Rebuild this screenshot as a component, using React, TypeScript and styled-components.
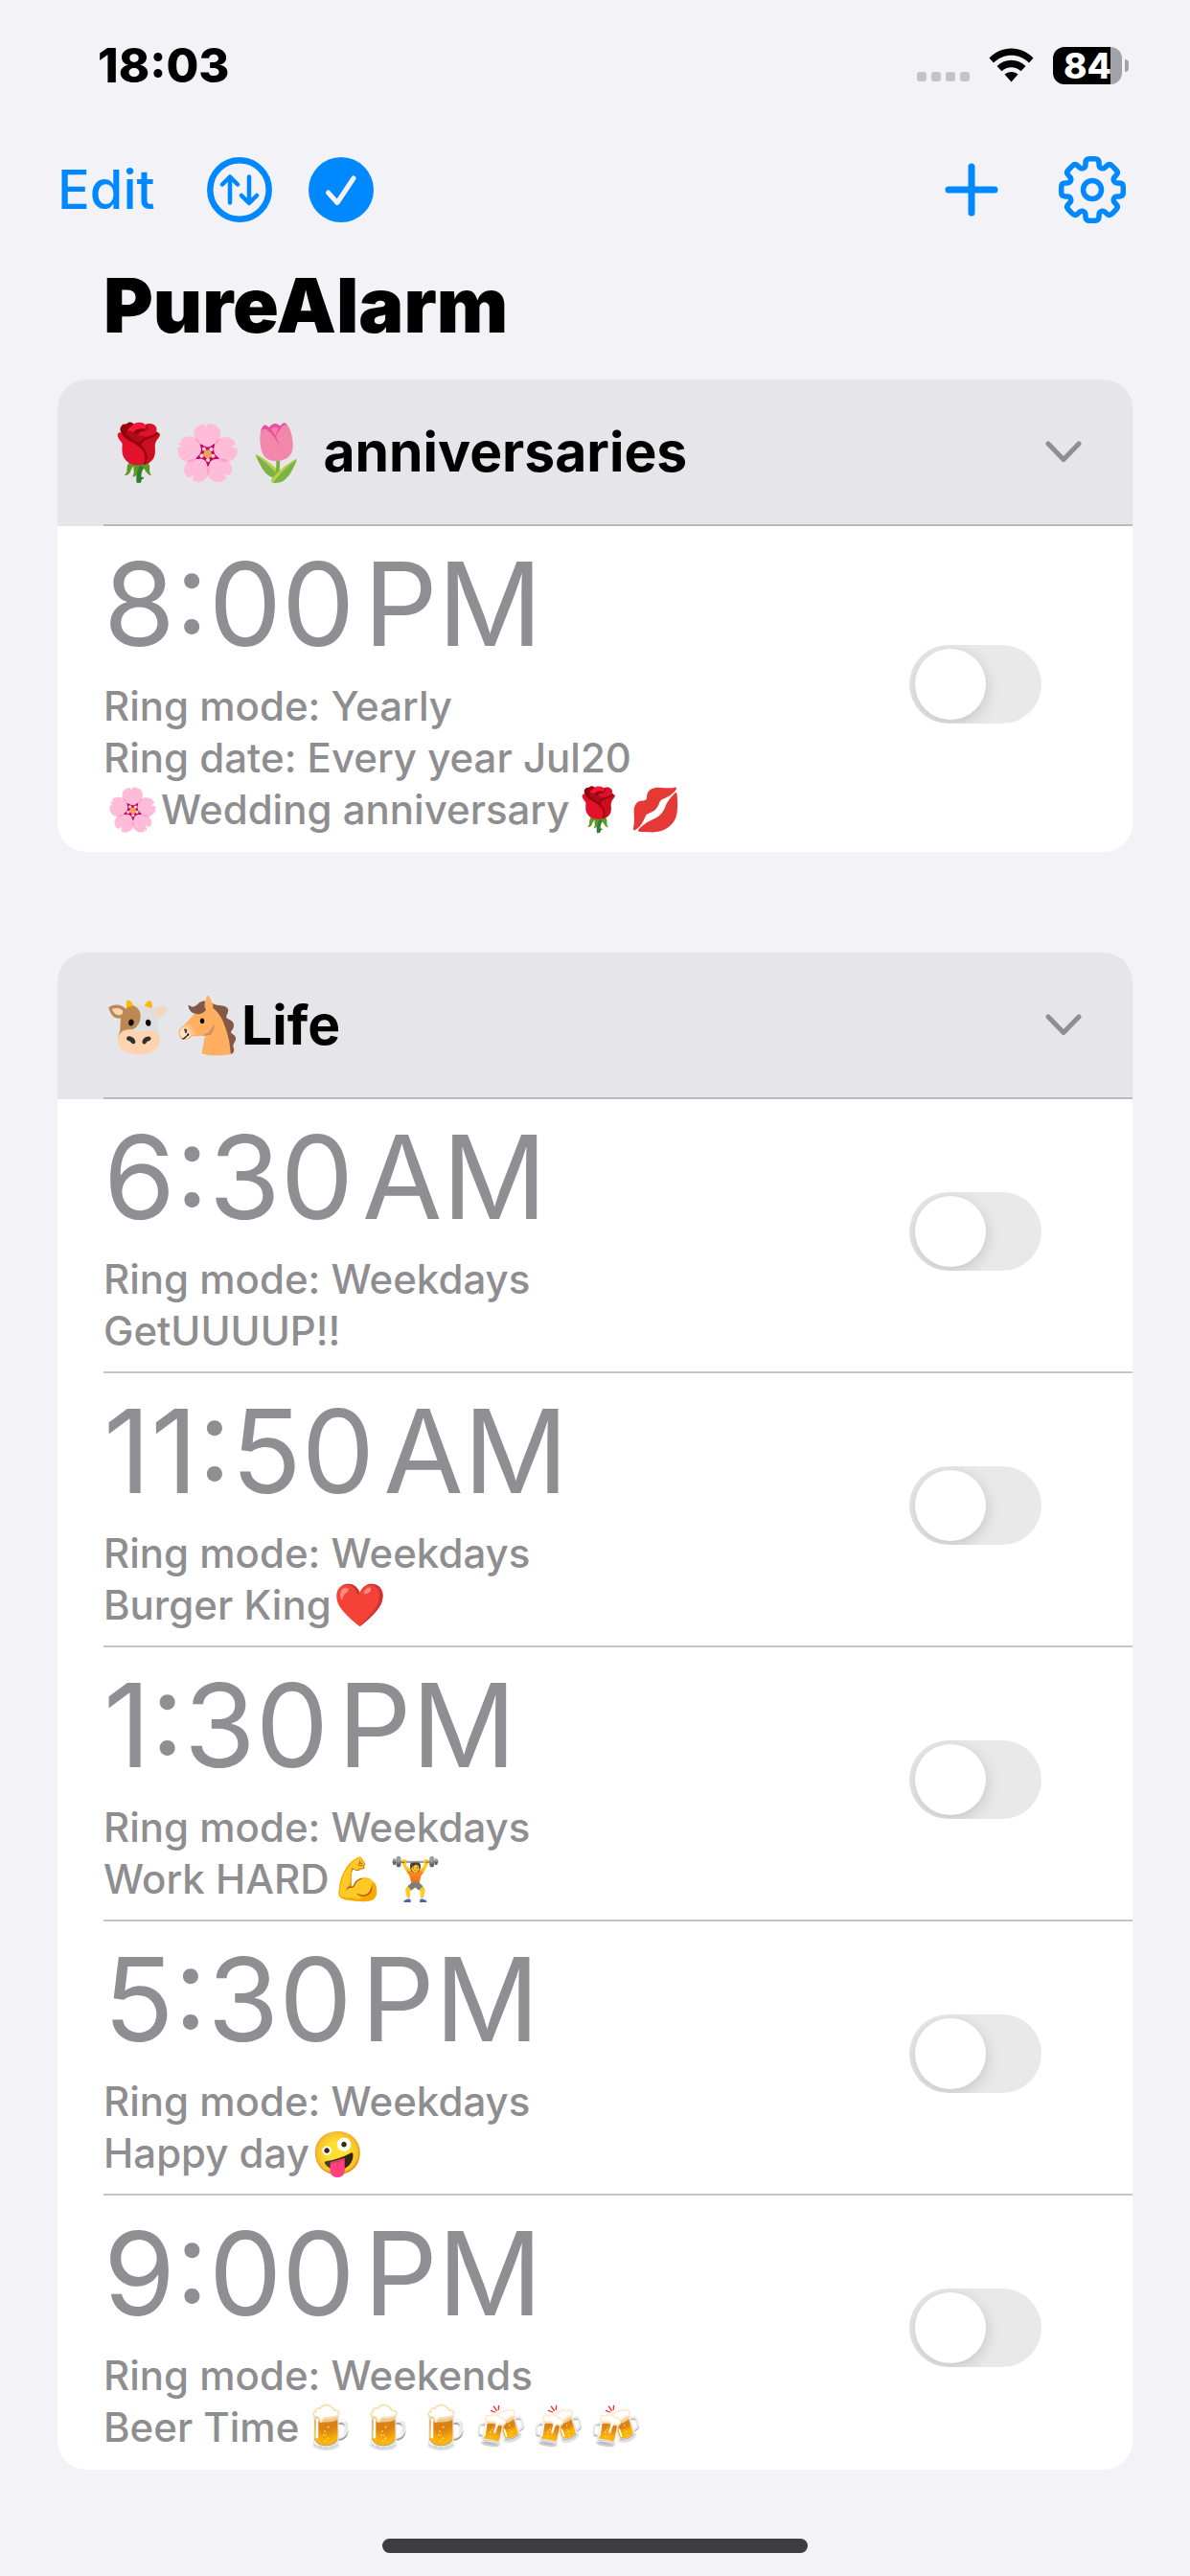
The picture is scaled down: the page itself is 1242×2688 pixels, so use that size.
import React, { useState } from "react";
import styled, { createGlobalStyle } from "styled-components";

const BLUE = "#0088ff";

const GlobalStyle = createGlobalStyle`
  * { box-sizing: border-box; }
  body {
    margin: 0;
    background: #f2f2f7;
    font-family: Inter, "Liberation Sans", sans-serif;
    color: #000;
  }
  button { font: inherit; color: inherit; background: none; border: 0; padding: 0; cursor: pointer; }
  h1, h2, p { margin: 0; }
`;

const Screen = styled.div`
  display: flex;
  flex-direction: column;
  min-height: 100vh;
`;

const StatusBar = styled.header`
  display: flex;
  align-items: center;
  justify-content: space-between;
  height: 136px;
  padding: 0 64px 0 102px;
`;

const Clock = styled.time`
  font-size: 49px;
  font-weight: 800;
`;

const StatusIcons = styled.div`
  display: flex;
  align-items: center;
  gap: 20px;
`;

const SignalDots = styled.div`
  display: flex;
  gap: 5px;
  padding-top: 24px;
`;

const Dot = styled.span`
  width: 10px;
  height: 10px;
  border-radius: 3px;
  background: #c4c4c8;
`;

const Battery = styled.div`
  display: flex;
  align-items: center;
  gap: 3px;
`;

const BatteryBody = styled.div`
  display: flex;
  align-items: center;
  justify-content: center;
  width: 72px;
  height: 39px;
  border-radius: 12px;
  background: linear-gradient(to right, #000 84%, #a2a2aa 84%);
  color: #fff;
  font-size: 37px;
  font-weight: 800;
`;

const BatteryTip = styled.span`
  width: 4px;
  height: 13px;
  border-radius: 0 4px 4px 0;
  background: #a2a2aa;
`;

const Toolbar = styled.nav`
  display: flex;
  align-items: center;
  justify-content: space-between;
  height: 124px;
  padding: 0 66px 0 60px;
  color: ${BLUE};
`;

const ToolGroup = styled.div<{ $gap: number }>`
  display: flex;
  align-items: center;
  gap: ${(p) => p.$gap}px;
`;

const ToolButton = styled.button`
  display: flex;
  align-items: center;
`;

const EditButton = styled(ToolButton)`
  margin-right: 16px;
  font-size: 56px;
  font-weight: 500;
`;

const Title = styled.h1`
  padding: 12px 108px 0;
  font-size: 79px;
  line-height: 92px;
  font-weight: 900;
`;

const Groups = styled.main`
  display: flex;
  flex-direction: column;
  gap: 105px;
  padding: 32px 60px 0;
`;

const Card = styled.section`
  overflow: hidden;
  border-radius: 30px;
  background: #fff;
`;

const CardTitle = styled.h2`
  padding-left: 48px;
  background: #e5e5ea;
  font-size: 57px;
  font-weight: 700;
`;

const CardToggle = styled.button`
  display: flex;
  align-items: center;
  justify-content: space-between;
  width: 100%;
  height: 153px;
  padding-right: 53px;
  border-bottom: 2px solid #b9b9be;
`;

const Emoji = styled.span<{ $cell: number }>`
  display: inline-block;
  width: ${(p) => p.$cell}px;
  text-align: center;
`;

const Row = styled.div`
  padding-left: 48px;
`;

const RowInner = styled.div`
  display: flex;
  align-items: center;
  justify-content: space-between;
  padding: 6px 95px 15px 0;
  border-bottom: 2px solid #c6c6c8;
  ${Row}:last-child & { border-bottom-color: transparent; }
`;

const Time = styled.label`
  display: flex;
  gap: 9px;
  margin-bottom: 5px;
  font-size: 121px;
  line-height: 150px;
  color: #8e8e93;
`;

const Line = styled.p`
  height: 54px;
  font-size: 42px;
  line-height: 54px;
  font-weight: 500;
  color: #8e8e90;
  white-space: nowrap;

  ${Emoji} {
    font-size: 44px;
    line-height: 50px;
  }
`;

const Switch = styled.input`
  appearance: none;
  flex: none;
  width: 138px;
  height: 82px;
  margin: 0;
  padding: 4px 6px;
  border-radius: 41px;
  background: #e9e9e9;
  overflow: hidden;
  cursor: pointer;

  &::before {
    content: "";
    display: block;
    width: 74px;
    height: 74px;
    border-radius: 50%;
    background: #fff;
    box-shadow: 0 4px 16px rgba(0, 0, 0, 0.16);
  }
  &:checked { background: #34c759; }
  &:checked::before { margin-left: auto; }
`;

const HomeIndicator = styled.div`
  align-self: center;
  width: 444px;
  height: 15px;
  margin: auto 0 24px;
  border-radius: 8px;
  background: #3c3c41;
`;

const WifiIcon = () => (
  <svg width="47" height="36" viewBox="0 0 47 36" aria-hidden="true">
    <path d="M0.5 10.5 C13 -3 34 -3 46.5 10.5 L42 15.5 C31.5 5 15.5 5 5 15.5 Z" />
    <path d="M8.5 19 C17 10.5 30 10.5 38.5 19 L33.5 24.3 C28 19 19 19 13.5 24.3 Z" />
    <path d="M16.5 27.5 C20.5 24 26.5 24 30.5 27.5 L23.5 35.5 Z" />
  </svg>
);

const SortIcon = () => (
  <svg width="68" height="68" viewBox="0 0 68 68" fill="none" stroke={BLUE} strokeLinecap="round" strokeLinejoin="round" aria-hidden="true">
    <circle cx="34" cy="34" r="30.7" strokeWidth="6.5" />
    <path d="M24 47.5V21M16 28.5L24 20.5L32 28.5M44 20.5V47M36 40L44 48L52 40" strokeWidth="4.5" />
  </svg>
);

const CheckIcon = () => (
  <svg width="68" height="68" viewBox="0 0 68 68" fill="none" aria-hidden="true">
    <circle cx="34" cy="34" r="34" fill={BLUE} />
    <path d="M20.5 37L30 47.5L47 22" stroke="#f2f2f7" strokeWidth="5" strokeLinecap="round" strokeLinejoin="round" />
  </svg>
);

const PlusIcon = () => (
  <svg width="56" height="56" viewBox="0 0 56 56" stroke={BLUE} strokeWidth="7" strokeLinecap="round" aria-hidden="true">
    <path d="M28 4V52M4 28H52" />
  </svg>
);

const gearPath = () => {
  const corners: [number, number, number][] = [];
  for (let i = 0; i < 8; i++) {
    const c = i * 45;
    corners.push([24.5, c - 17, 2.5], [33, c - 12, 4], [33, c + 12, 4], [24.5, c + 17, 2.5]);
  }
  const pts = corners.map(([r, deg, round]) => {
    const a = (deg * Math.PI) / 180;
    return { x: 36 + r * Math.sin(a), y: 36 - r * Math.cos(a), round };
  });
  const toward = (p: (typeof pts)[0], q: (typeof pts)[0]) => {
    const d = Math.hypot(q.x - p.x, q.y - p.y);
    return `${(p.x + ((q.x - p.x) * p.round) / d).toFixed(2)} ${(p.y + ((q.y - p.y) * p.round) / d).toFixed(2)}`;
  };
  const n = pts.length;
  return (
    pts
      .map((p, i) => `${i ? "L" : "M"}${toward(p, pts[(i + n - 1) % n])}Q${p.x.toFixed(2)} ${p.y.toFixed(2)} ${toward(p, pts[(i + 1) % n])}`)
      .join("") + "Z"
  );
};

const GearIcon = () => (
  <svg width="72" height="72" viewBox="0 0 72 72" fill="none" stroke={BLUE} strokeWidth="5.5" strokeLinejoin="round" aria-hidden="true">
    <path d={gearPath()} />
    <circle cx="36" cy="36" r="9.5" />
  </svg>
);

const Chevron = () => (
  <svg width="38" height="24" viewBox="0 0 38 24" fill="none" stroke="#8e8e93" strokeWidth="5" strokeLinecap="round" strokeLinejoin="round" aria-hidden="true">
    <path d="M3 3L19 19.5L35 3" />
  </svg>
);

type Alarm = { time: string; period: "AM" | "PM"; lines: string[] };
type Group = { name: string; alarms: Alarm[] };

const groups: Group[] = [
  {
    name: "🌹🌸🌷 anniversaries",
    alarms: [
      { time: "8:00", period: "PM", lines: ["Ring mode: Yearly", "Ring date: Every year Jul20", "🌸Wedding anniversary🌹💋"] },
    ],
  },
  {
    name: "🐮🐴Life",
    alarms: [
      { time: "6:30", period: "AM", lines: ["Ring mode: Weekdays", "GetUUUUP!!"] },
      { time: "11:50", period: "AM", lines: ["Ring mode: Weekdays", "Burger King❤️"] },
      { time: "1:30", period: "PM", lines: ["Ring mode: Weekdays", "Work HARD💪🏋️"] },
      { time: "5:30", period: "PM", lines: ["Ring mode: Weekdays", "Happy day🤪"] },
      { time: "9:00", period: "PM", lines: ["Ring mode: Weekends", "Beer Time🍺🍺🍺🍻🍻🍻"] },
    ],
  },
];

// Gives every emoji in a label a cell of equal width.
const RichText = ({ text, cell }: { text: string; cell: number }) => (
  <>
    {text
      .split(/(\p{Extended_Pictographic}\uFE0F?)/u)
      .filter(Boolean)
      .map((part, i) =>
        /\p{Extended_Pictographic}/u.test(part) ? (
          <Emoji key={i} $cell={cell}>{part}</Emoji>
        ) : (
          <React.Fragment key={i}>{part}</React.Fragment>
        )
      )}
  </>
);

const AlarmRow = ({ alarm, id }: { alarm: Alarm; id: string }) => (
  <Row>
    <RowInner>
      <div>
        <Time htmlFor={id}>
          <span>{alarm.time}</span>
          <span>{alarm.period}</span>
        </Time>
        {alarm.lines.map((line) => (
          <Line key={line}>
            <RichText text={line} cell={60} />
          </Line>
        ))}
      </div>
      <Switch id={id} type="checkbox" role="switch" />
    </RowInner>
  </Row>
);

const AlarmGroup = ({ group, index }: { group: Group; index: number }) => {
  const [open, setOpen] = useState(true);
  return (
    <Card>
      <CardTitle>
        <CardToggle aria-expanded={open} onClick={() => setOpen(!open)}>
          <span>
            <RichText text={group.name} cell={72} />
          </span>
          <Chevron />
        </CardToggle>
      </CardTitle>
      {open && group.alarms.map((alarm, i) => <AlarmRow key={alarm.time} alarm={alarm} id={`alarm-${index}-${i}`} />)}
    </Card>
  );
};

export default function App() {
  return (
    <Screen>
      <GlobalStyle />
      <StatusBar>
        <Clock>18:03</Clock>
        <StatusIcons>
          <SignalDots>
            <Dot />
            <Dot />
            <Dot />
            <Dot />
          </SignalDots>
          <WifiIcon />
          <Battery>
            <BatteryBody>84</BatteryBody>
            <BatteryTip />
          </Battery>
        </StatusIcons>
      </StatusBar>
      <Toolbar>
        <ToolGroup $gap={38}>
          <EditButton>Edit</EditButton>
          <ToolButton aria-label="Sort alarms"><SortIcon /></ToolButton>
          <ToolButton aria-label="Select alarms"><CheckIcon /></ToolButton>
        </ToolGroup>
        <ToolGroup $gap={62}>
          <ToolButton aria-label="Add alarm"><PlusIcon /></ToolButton>
          <ToolButton aria-label="Settings"><GearIcon /></ToolButton>
        </ToolGroup>
      </Toolbar>
      <Title>PureAlarm</Title>
      <Groups>
        {groups.map((group, i) => (
          <AlarmGroup key={group.name} group={group} index={i} />
        ))}
      </Groups>
      <HomeIndicator />
    </Screen>
  );
}
